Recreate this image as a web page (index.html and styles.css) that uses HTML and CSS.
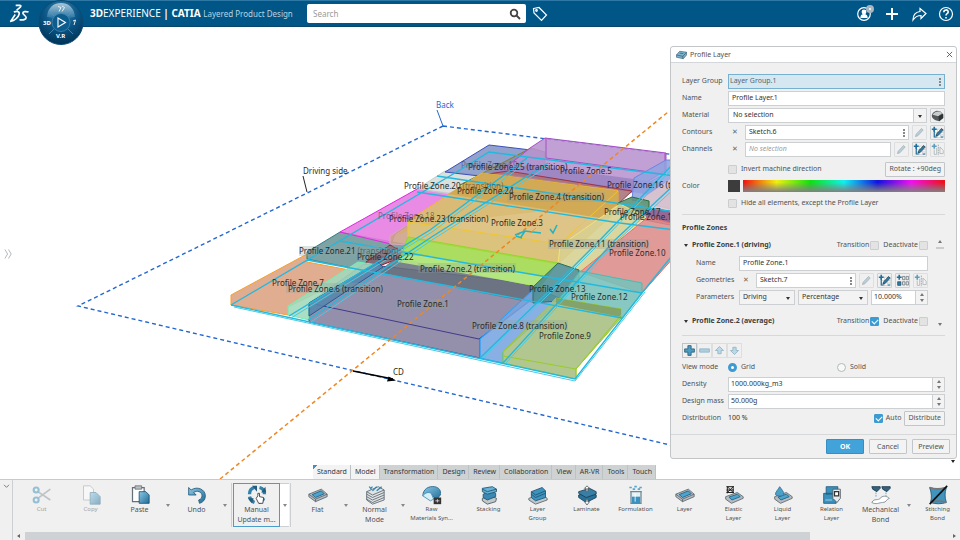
FILE: index.html
```html
<!DOCTYPE html>
<html lang="en">
<head>
    <meta charset="UTF-8">
    <meta name="viewport" content="width=device-width, initial-scale=1.0">
    <title>3DEXPERIENCE | CATIA Layered Product Design</title>
    <link rel="stylesheet" href="styles.css">
</head>
<body>
    <!-- Shared icons -->
    <svg class="sprite" aria-hidden="true">
        <defs>
            <linearGradient id="steel" x1="0" y1="0" x2="1" y2="1">
                <stop offset="0" stop-color="#8cc8e6"/>
                <stop offset="1" stop-color="#1f6c98"/>
            </linearGradient>
            <radialGradient id="dial" cx="50%" cy="25%" r="75%">
                <stop offset="0" stop-color="#3f86b0"/>
                <stop offset="0.5" stop-color="#0b5787"/>
                <stop offset="1" stop-color="#003357"/>
            </radialGradient>
            <linearGradient id="shine" x1="0" y1="0" x2="0" y2="1">
                <stop offset="0" stop-color="#a9c6d8"/>
                <stop offset="1" stop-color="#2a77a5"/>
            </linearGradient>
        </defs>
        <symbol id="i-pencil" viewBox="0 0 16 16">
            <path d="M3 13l1-3 6.500-7 2 2-6.500 7z" fill="#a9c8d8" stroke="#8a979f" stroke-width=".8"/>
        </symbol>
        <symbol id="i-sketch" viewBox="0 0 16 16">
            <path d="M4 4h11v10H4zM4 8h11M4 11h11M8 4v10M12 4v10" fill="#fff" stroke="#a9b2b8" stroke-width=".6"/>
            <path d="M4 4v9.500h3M12 13.500h3" fill="none" stroke="#1b6e9b" stroke-width="1.400"/>
            <path d="M6 12.500l1-3 6-6.500 2 2-6 6.500z" fill="#2b7ca8" stroke="#1c3442" stroke-width=".8"/>
            <path d="M4 1v6M1 4h6" stroke="#1f6f9c" stroke-width="2"/>
        </symbol>
        <symbol id="i-pattern" viewBox="0 0 16 16">
            <path d="M8 3h3v4H8zM12.500 3h3v4h-3zM8 9.500h3v4H8zM12.500 9.500h3v4h-3z" fill="#e6e6e6" stroke="#68737a" stroke-width=".9"/>
            <path d="M2 9.500h4v4.500H2z" fill="#2b7ca8" stroke="#20445a" stroke-width=".8"/>
            <path d="M4 1v6M1 4h6" stroke="#1f6f9c" stroke-width="2"/>
        </symbol>
        <symbol id="i-mirror" viewBox="0 0 16 16">
            <path d="M4 8v6h3V6M11 13V5l4 4v4z" fill="#f4f4f4" stroke="#939ca2" stroke-width=".9"/>
            <path d="M9 2v13" stroke="#5c676e" stroke-width=".8" stroke-dasharray="2 1"/>
            <path d="M4 1v6M1 4h6" stroke="#3b89b2" stroke-width="2"/>
        </symbol>
        <symbol id="i-layer" viewBox="0 0 24 24">
            <path d="M1 11l15-6 7 6v3L9 20l-8-6z" fill="#b5bcc1" stroke="#59646c"/>
            <path d="M1 11l8 6 14-6M9 17v3" fill="none" stroke="#59646c"/>
            <path d="M5 11.500l11-4.500 3.500 3.500-10.500 4.500z" fill="#4da4cf" stroke="#1c5d80"/>
        </symbol>
    </svg>

    <header>
        <svg class="logo" viewBox="0 0 22 20" role="img" aria-label="DS">
            <path d="M7 1.500h4.500c1.500 0 1 1.500-.5 2.500L8 6.500M5 8.500c4-1.500 6.500-.500 5.500 2.500-1 3.500-4 6-9.500 7.500M1.500 18.500L6.500 11M20.500 8.500c-3-1-6-.500-6 1 0 2 3.500 2.500 3.500 5 0 2-3.500 2.500-7 2" fill="none" stroke="#fff" stroke-width="1.700"/>
        </svg>
        <div class="compass">
            <svg viewBox="0 0 46 46" role="img" aria-label="Compass">
                <circle cx="23" cy="22.500" r="22" fill="url(#dial)" stroke="#0b4b74"/>
                <path d="M9 17C10 7 16 3 23 3s13 4 14 14l-7 1c-2-5-12-5-14 0z" fill="url(#shine)"/>
                <circle cx="23" cy="22.500" r="9" fill="#0c5c8d" stroke="#3f89b4" stroke-width=".8"/>
                <path d="M11 11l5 5M35 11l-5 5M11 34l5-5M35 34l-5-5" stroke="#4f97bf" stroke-width=".8"/>
                <path d="M20 18l7.500 4.500L20 27z" fill="none" stroke="#fff" stroke-width="1.100"/>
                <path d="M20 6.500l3 1-2 4M24 6l2.500 1.500-2.500 4M35 21l2.500-1-1.500 5" fill="none" stroke="#e4f1f8"/>
                <text x="5" y="25">3D</text>
                <text x="18" y="38">V.R</text>
            </svg>
        </div>
        <h1><b>3D</b>EXPERIENCE <b>| CATIA</b> <span>Layered Product Design</span></h1>
        <form class="search">
            <input type="search" placeholder="Search" aria-label="Search">
            <button type="button" aria-label="Run search">
                <svg viewBox="0 0 12 12"><circle cx="5" cy="5" r="3.300"/><path d="M7.500 7.500l3.500 3.500"/></svg>
            </button>
        </form>
        <button class="bar-icon" aria-label="Tags">
            <svg viewBox="0 0 16 16"><path d="M1.500 2.500L7 1.500l7.500 7.500-5 5.500L2 7z"/><circle cx="4.500" cy="4.500" r=".8"/></svg>
        </button>
        <nav class="bar-actions">
            <button class="bar-icon" aria-label="Profile">
                <svg viewBox="0 0 16 16"><circle cx="7" cy="8" r="6.300"/><circle cx="7" cy="6" r="1.800" fill="#fff"/><path d="M4 11.500c0-4 6-4 6 0z" fill="#fff"/></svg>
                <i class="status"></i>
            </button>
            <button class="bar-icon" aria-label="Add">
                <svg viewBox="0 0 16 16"><path d="M8 2v12M2 8h12" stroke-width="2"/></svg>
            </button>
            <button class="bar-icon" aria-label="Share">
                <svg viewBox="0 0 16 16"><path d="M9 2.500l6 5-5 5V9.500C6 9.500 4 11 2 14c0-5 3-8 7-8.500z"/></svg>
            </button>
            <button class="bar-icon" aria-label="Help">
                <svg viewBox="0 0 16 16"><circle cx="8" cy="8" r="6.500"/><path d="M5.800 6.200c0-3 4.400-3 4.400-.2 0 1.700-2.200 1.700-2.200 3.500M8 11v1.500" stroke-width="1.600"/></svg>
            </button>
        </nav>
    </header>

    <main>
        <!-- 3D view -->
        <svg class="scene" viewBox="0 27 960 452" preserveAspectRatio="xMidYMid slice">
            <g class="frame">
                <path d="M443 126L78 306L700 452M443 126L700 158"/>
                <path d="M443 126l-6-16" class="solid"/>
            </g>
            <g class="solids">
                <path d="M231 295L307 254V262L360 272L288 307V315L231 305z" fill="#dda282" stroke="#f5a12c"/>
                <path d="M307 252L340 232L408 245L366 271L307 259z" fill="#6d9598" stroke="#2f7f84"/>
                <path d="M340 232L417 189L457 194L395 234L391 244z" fill="#e67ae0" stroke="#dd2ade"/>
                <path d="M417 189L445 171L488 176L457 195z" fill="#d5dcd6" stroke="#b9cfd0"/>
                <path d="M445 172L489 145L531 150L488 177z" fill="#8494c6" stroke="#3c50b8"/>
                <path d="M390 244V236L457 193L484 175L484 190L408 245z" fill="#cda08a" stroke="#d9a8c0"/>
                <path d="M460 185L531 148L545 152L545 165L483 176z" fill="#8790a5" stroke="#817f30"/>
                <path d="M545 138L666 153V170L634 190L500 172L530 148z" fill="#b893cf" stroke="#a64fc4"/>
                <path d="M546 138V158L665 174V153M665 174L630 193" fill="none" stroke="#a64fc4"/>
                <path d="M488 172L530 165L670 184V198L632 192z" fill="#9a83c2"/>
                <path d="M634 178L666 160H675V210L632 200z" fill="#91a2e0" stroke="#6a86e0"/>
                <path d="M640 200L675 176V225L648 214z" fill="#dfc5cc"/>
                <path d="M488 174L508 171L632 191L616 206L482 183z" fill="#a8727a" stroke="#9c3440"/>
                <path d="M395 236L484 174L618 190V203L420 225z" fill="#d8ad67"/>
                <path d="M408 221L482 173L618 191V210L558 264L408 238z" fill="#d9bd76" stroke="#f2ba2b"/>
                <path d="M448 194L483 173L618 191V204L600 218z" fill="#d0a650"/>
                <path d="M408 222L560 244V264L408 238z" fill="#dbc37c" stroke="#f0c52f"/>
                <path d="M560 244L618 191" stroke="#f0c52f"/>
                <path d="M618 203L632 197L649 201V211L640 217L618 212z" fill="#5a9275" stroke="#236f37"/>
                <path d="M648 208L675 212V226L640 219z" fill="#8d5a8b" stroke="#5f1465"/>
                <path d="M560 246L620 204L646 217L580 272L558 264z" fill="#d6cf91" stroke="#f0e37a"/>
                <path d="M580 272L648 217L675 224V256L642 293z" fill="#dc8d8a" stroke="#e76b6b"/>
                <path d="M390 245L366 262V271L408 255z" fill="#82626f" stroke="#8c1c2a"/>
                <path d="M309 303L364 264L534 284V298L480 339V358L309 322z" fill="#85809f" stroke="#423a8a"/>
                <path d="M378 272L404 251L544 277L533 303z" fill="#66707d"/>
                <path d="M309 303L479 339L533 298" fill="none" stroke="#423a8a"/>
                <path d="M408 237L558 263L540 287L400 258z" fill="#9fd84b" stroke="#8fda27"/>
                <path d="M400 255L430 256L545 277L535 286L398 262z" fill="#b7e985"/>
                <path d="M288 306L358 262L378 265L309 308V320L288 315z" fill="#a1d9bc" stroke="#73f0b4"/>
                <path d="M309 303L378 262L383 267L309 316z" fill="#5786ad" stroke="#27598c"/>
                <path d="M480 339L535 288L562 299L503 352V363L480 358z" fill="#79a5e0" stroke="#1da4ff"/>
                <path d="M558 263L579 270V283L557 301L533 303V287z" fill="#4d8d93" stroke="#2d7061"/>
                <path d="M580 271L642 283V293L622 318L556 303z" fill="#76c2b9" stroke="#45bdb4"/>
                <path d="M503 352L556 298L621 309V318L576 369V379L503 363z" fill="#a6bf80" stroke="#99cc25"/>
                <path d="M556 298L621 309V317L556 304z" fill="#7f9e67"/>
                <path d="M503 356L576 369L621 315M576 369V379" fill="none" stroke="#99cc25"/>
            </g>
            <path class="edges" d="M231 305L575 379L642 293L675 252M231 305L460 170L489 152L675 176M289 316L430 230L527 158M308 320L430 238L548 163M480 358L545 295L600 240L675 162M503 363L615 240L675 184M307 260L460 288L622 318M340 241L460 262L642 293M417 192L620 223L675 230M437 176L675 212"/>
            <path class="edges light" d="M234 307L575 381L645 292M291 318L432 232L530 160M311 322L432 240L550 165M483 358L548 295L603 240L675 166M506 363L618 240L675 188"/>
            <path class="axis" d="M220 479L668 112"/>
            <g class="triad">
                <path d="M515 235l10-4 16 2M521 237l4-6M550 229l3 4 4-8M516 236l6 2"/>
                <path d="M525 221v6M528 220v7M536 228l-6 5" class="warm"/>
            </g>
            <path d="M303 176l4 16" stroke="#222"/>
            <path d="M353 371l40 8" stroke="#000" stroke-width="1.500"/>
            <path d="M396 380.500l-9 1 1.500-5z"/>
            <g class="tags">
                <path d="M286 283h98v10h-98zM299 246h105v10H299zM418 263h98v10h-98zM396 299h54v10h-54zM471 320h97v10h-97zM507 192h98v10h-98zM548 239h101v10H548z"/>
            </g>
            <g class="labels">
                <text x="436" y="108" class="blue">Back</text>
                <text x="303" y="174">Driving side</text>
                <text x="393" y="375">CD</text>
                <text x="461" y="168" class="dim">Profile Zone.19</text>
                <text x="468" y="170">Profile Zone.25 (transition)</text>
                <text x="560" y="174">Profile Zone.5</text>
                <text x="404" y="189">Profile Zone.20 <tspan class="dim">(transition)</tspan></text>
                <text x="457" y="194">Profile Zone.24</text>
                <text x="509" y="200">Profile Zone.4 (transition)</text>
                <text x="607" y="188">Profile Zone.16 (transition)</text>
                <text x="604" y="215">Profile Zone.17</text>
                <text x="620" y="220">Profile Zone.15</text>
                <text x="491" y="226">Profile Zone.3</text>
                <text x="378" y="219" class="dim">Profile Zone.18</text>
                <text x="389" y="222">Profile Zone.23 (transition)</text>
                <text x="549" y="247">Profile Zone.11 (transition)</text>
                <text x="609" y="256">Profile Zone.10</text>
                <text x="299" y="254">Profile Zone.21 <tspan class="dim">(transition)</tspan></text>
                <text x="357" y="260">Profile Zone.22</text>
                <text x="420" y="272">Profile Zone.2 (transition)</text>
                <text x="272" y="286">Profile Zone.7</text>
                <text x="288" y="292">Profile Zone.6 (transition)</text>
                <text x="529" y="292">Profile Zone.13</text>
                <text x="571" y="300">Profile Zone.12</text>
                <text x="397" y="307">Profile Zone.1</text>
                <text x="472" y="329">Profile Zone.8 (transition)</text>
                <text x="539" y="339">Profile Zone.9</text>
            </g>
        </svg>
        <button class="tree-toggle" aria-label="Show tree">
            <svg viewBox="0 0 10 12"><path d="M1 1l3 5-3 5M5 1l3 5-3 5"/></svg>
        </button>

        <!-- Profile Layer dialog -->
        <section class="dialog" role="dialog" aria-labelledby="dialog-title">
            <div class="dialog-title">
                <svg viewBox="0 0 24 24"><path d="M1 13L8 5l15 2v6l-7 8-15-3z" fill="#7db5d1" stroke="#3f6377" stroke-width="1.500"/><path d="M1 13l14 3 8-9M15 16v5M8 9l8 1" fill="none" stroke="#33566a" stroke-width="1.500"/></svg>
                <h2 id="dialog-title">Profile Layer</h2>
                <button class="close" aria-label="Close"><svg viewBox="0 0 8 8"><path d="M1 1l6 6M7 1L1 7"/></svg></button>
            </div>
            <div class="dialog-body">
                <div class="row">
                    <label for="group">Layer Group</label>
                    <span class="field active"><input id="group" value="Layer Group.1"><i class="dots"></i></span>
                </div>
                <div class="row">
                    <label for="name">Name</label>
                    <span class="field"><input id="name" value="Profile Layer.1"></span>
                </div>
                <div class="row">
                    <label for="material">Material</label>
                    <span class="select plain"><select id="material"><option>No selection</option></select></span>
                    <button class="tile" aria-label="Material library"><svg viewBox="0 0 16 16"><path d="M1 8c0-3 3-5 6-6 4 0 7 2 8 5v4l-5 4C5 14 1 12 1 8z" fill="#55595c"/><path d="M2 7c3-5 9-5 12-2l-5 4z" fill="#c9cccd"/><path d="M9 9l6-3v5l-5 4z" fill="#303335"/></svg></button>
                </div>
                <div class="row">
                    <label for="contours">Contours</label>
                    <button class="clear" aria-label="Clear contours">✕</button>
                    <span class="field"><input id="contours" value="Sketch.6"><i class="dots"></i></span>
                    <button class="tile off" aria-label="Edit contour"><svg><use href="#i-pencil"/></svg></button>
                    <button class="tile" aria-label="New contour"><svg><use href="#i-sketch"/></svg></button>
                </div>
                <div class="row group-end">
                    <label for="channels">Channels</label>
                    <button class="clear" aria-label="Clear channels">✕</button>
                    <span class="field"><input id="channels" placeholder="No selection"></span>
                    <button class="tile off" aria-label="Edit channel"><svg><use href="#i-pencil"/></svg></button>
                    <button class="tile" aria-label="New channel"><svg><use href="#i-sketch"/></svg></button>
                    <button class="tile off" aria-label="Mirror channel"><svg><use href="#i-mirror"/></svg></button>
                </div>
                <div class="row indent">
                    <input type="checkbox" id="invert"><label for="invert">Invert machine direction</label>
                    <button class="btn push">Rotate : +90deg</button>
                </div>
                <div class="row">
                    <label for="hue">Color</label>
                    <button class="swatch" id="hue" aria-label="Current color"></button>
                    <div class="spectrum"></div>
                </div>
                <div class="row indent">
                    <input type="checkbox" id="hide"><label for="hide">Hide all elements, except the Profile Layer</label>
                </div>

                <hr>
                <h3>Profile Zones</h3>
                <div class="zones">
                    <div class="zone-list">
                        <div class="zone-head">
                            <i class="down"></i><h4>Profile Zone.1 (driving)</h4>
                            <label for="t1">Transition</label><input type="checkbox" id="t1">
                            <label for="d1">Deactivate</label><input type="checkbox" id="d1">
                        </div>
                        <div class="row">
                            <label for="zname">Name</label>
                            <span class="field"><input id="zname" value="Profile Zone.1"></span>
                        </div>
                        <div class="row">
                            <label for="geom">Geometries</label>
                            <button class="clear" aria-label="Clear geometries">✕</button>
                            <span class="field"><input id="geom" value="Sketch.7"><i class="dots"></i></span>
                            <button class="tile off" aria-label="Edit geometry"><svg><use href="#i-pencil"/></svg></button>
                            <button class="tile" aria-label="New geometry"><svg><use href="#i-sketch"/></svg></button>
                            <button class="tile" aria-label="Pattern"><svg><use href="#i-pattern"/></svg></button>
                            <button class="tile off" aria-label="Mirror"><svg><use href="#i-mirror"/></svg></button>
                        </div>
                        <div class="row">
                            <label for="params">Parameters</label>
                            <span class="select"><select id="params"><option>Driving</option></select></span>
                            <span class="select wide"><select aria-label="Unit"><option>Percentage</option></select></span>
                            <span class="field spin"><input aria-label="Value" value="10.000%"><span class="steps"><button class="up" aria-label="Increase"></button><button class="down" aria-label="Decrease"></button></span></span>
                        </div>
                        <div class="zone-head last">
                            <i class="down"></i><h4>Profile Zone.2 (average)</h4>
                            <label for="t2">Transition</label><input type="checkbox" id="t2" checked>
                            <label for="d2">Deactivate</label><input type="checkbox" id="d2">
                        </div>
                    </div>
                    <div class="zone-scroll"><i class="up"></i><b></b><i class="down"></i></div>
                </div>
                <hr>

                <div class="zone-tools">
                    <button aria-label="Add zone"><svg viewBox="0 0 16 16"><path d="M6 2h4v4h4v4h-4v4H6v-4H2V6h4z" fill="#4b9cc4" stroke="#285a75"/></svg></button>
                    <button aria-label="Remove zone" class="off"><svg viewBox="0 0 16 16"><path d="M2 6h12v4H2z" fill="#aecfdf" stroke="#8eb2c4"/></svg></button>
                    <button aria-label="Move up" class="off"><svg viewBox="0 0 16 16"><path d="M8 3l5 5h-3v4H6V8H3z" fill="#bcd9e6" stroke="#8eb2c4"/></svg></button>
                    <button aria-label="Move down" class="off"><svg viewBox="0 0 16 16"><path d="M8 13l5-5h-3V4H6v4H3z" fill="#bcd9e6" stroke="#8eb2c4"/></svg></button>
                </div>
                <div class="row view-mode">
                    <span>View mode</span>
                    <input type="radio" name="view" id="grid" checked><label for="grid">Grid</label>
                    <input type="radio" name="view" id="solid"><label for="solid">Solid</label>
                </div>
                <div class="row">
                    <label for="density">Density</label>
                    <span class="field spin"><input id="density" value="1000.000kg_m3"><span class="steps"><button class="up" aria-label="Increase"></button><button class="down" aria-label="Decrease"></button></span></span>
                </div>
                <div class="row">
                    <label for="mass">Design mass</label>
                    <span class="field spin"><input id="mass" value="50.000g"><span class="steps"><button class="up" aria-label="Increase"></button><button class="down" aria-label="Decrease"></button></span></span>
                </div>
                <div class="row distribution">
                    <span>Distribution</span><output>100 %</output>
                    <input type="checkbox" id="auto" checked><label for="auto">Auto</label>
                    <button class="btn">Distribute</button>
                </div>
            </div>
            <div class="dialog-footer">
                <button class="btn primary">OK</button>
                <button class="btn">Cancel</button>
                <button class="btn">Preview</button>
            </div>
        </section>

        <nav class="tabs">
            <a href="#" class="first">Standard</a>
            <a href="#" class="on">Model</a>
            <a href="#">Transformation</a>
            <a href="#">Design</a>
            <a href="#">Review</a>
            <a href="#">Collaboration</a>
            <a href="#">View</a>
            <a href="#">AR-VR</a>
            <a href="#">Tools</a>
            <a href="#">Touch</a>
        </nav>
        <i class="down corner"></i>
    </main>

    <footer>
        <button class="collapse" aria-label="Collapse"><svg viewBox="0 0 8 6"><path d="M1 1l3 3 3-3"/></svg></button>
        <div class="action-bar">
            <div class="tools">
                <button class="tool small disabled">
                    <svg viewBox="0 0 24 24"><path d="M7 8l15 10M7 16L22 5" stroke="#8d979d" stroke-width="2"/><circle cx="5" cy="6" r="3" fill="none" stroke="#3d8fba" stroke-width="2.500"/><circle cx="5" cy="18" r="3" fill="none" stroke="#3d8fba" stroke-width="2.500"/></svg>
                    Cut</button>
                <button class="tool small disabled">
                    <svg viewBox="0 0 24 24"><path d="M3 1h8l4 4v13H3z" fill="#fff" stroke="#8b959c"/><path d="M11 9h7l5 5v9H11z" fill="url(#steel)" stroke="#2e6a8a"/></svg>
                    Copy</button>
                <button class="tool">
                    <svg viewBox="0 0 24 24"><path d="M3 3h14v17H3z" fill="#fff" stroke="#667078" stroke-width="1.500"/><path d="M6 1h8v4H6z" fill="#b9c0c4" stroke="#667078"/><path d="M11 8h8l4 4v10H11z" fill="url(#steel)" stroke="#1c4f6d"/></svg>
                    Paste</button>
                <button class="more" aria-label="Paste options"></button>
                <button class="tool">
                    <svg viewBox="0 0 24 24"><path d="M2 3l3 3c7-5 17-1 17 7 0 5-3 8-7 9l-1-4c3-1 4-3 4-5 0-5-6-7-10-4l3 3H2z" fill="url(#steel)" stroke="#1f5878"/></svg>
                    Undo</button>
                <button class="more" aria-label="Undo options"></button>
                <div class="tool-group">
                    <button class="tool picked">
                        <svg viewBox="0 0 24 24"><path d="M3 11c0-4 2-7 6-8M15 3c4 1 6 4 6 8M3 14c1 4 3 6 6 7M14 21c3-1 5-2 6-5" fill="none" stroke="#3282ac" stroke-width="4"/><path d="M6 1h6v7zM17 9h6l-1-7zM1 16h7l-2 6z" fill="#225d7e"/><path d="M13 13v-3h2v4l5 1-1 7h-5l-3-6z" fill="#fff" stroke="#333"/></svg>
                        Manual<span>Update m...</span></button>
                    <button class="more" aria-label="Update options"></button>
                </div>
                <button class="tool">
                    <svg><use href="#i-layer"/></svg>
                    Flat</button>
                <button class="more" aria-label="Flat options"></button>
                <button class="tool">
                    <svg viewBox="0 0 24 24"><path d="M2 8l14-6 7 4v12L9 23l-7-5z" fill="#dfe3e5" stroke="#59646c"/><path d="M2 8l7 4 14-6M2 11l7 4 14-6M2 14l7 4 14-6M2 17l7 4 14-6" fill="none" stroke="#59646c"/><path d="M6 5l3-3M9 7l5-5M14 7l6-5M5 2l3 3" stroke="#2d83b1" stroke-width="1.500"/></svg>
                    Normal<span>Mode</span></button>
                <button class="more" aria-label="Mode options"></button>
                <button class="tool small">
                    <svg viewBox="0 0 24 24"><path d="M1 13C1 5 8 1 15 2c6 1 8 5 7 10l-5 6-6-8z" fill="url(#steel)" stroke="#1f6489"/><path d="M1 13c3-4 7-5 10-3l3 7-4 2z" fill="#d7eff8" stroke="#3d8ab0"/><path d="M14 15h9v8h-9z" fill="#333"/><path d="M16 19h5M18.500 17v4" stroke="#ddd"/></svg>
                    Raw<span>Materials Syn...</span></button>
                <i class="sep"></i>
                <button class="tool small">
                    <svg viewBox="0 0 24 24"><path d="M4 16l11-3 6 3-1 4-10 3-6-4z" fill="#c1c8cc" stroke="#4a565e"/><path d="M5 11l10-4 5 3v4l-10 4-5-3z" fill="#3a89b2" stroke="#1d526f"/><path d="M4 4l12-2 5 3v3l-11 3-6-3z" fill="#66b2d6" stroke="#1d526f"/><path d="M4 5l6 3 11-3" fill="none" stroke="#1d526f"/></svg>
                    Stacking</button>
                <button class="tool small">
                    <svg viewBox="0 0 24 24"><path d="M1 16l15-5 7 5v2L9 23l-8-5z" fill="#c1c8cc" stroke="#59646c"/><path d="M4 8l13-5 4 4v8l-12 4-5-4z" fill="#3d93c0" stroke="#1d526f"/><path d="M4 8l5 4 12-5M4 11l5 4 12-5" fill="none" stroke="#1d526f"/></svg>
                    Layer<span>Group</span></button>
                <button class="tool small">
                    <svg viewBox="0 0 24 24"><path d="M2 12l13-5 8 5v3L11 21l-9-6z" fill="#28719a" stroke="#143f58"/><path d="M2 8l13-4 8 4v3L11 15l-9-5z" fill="#397fa5" stroke="#143f58"/><path d="M12 1l3 3h-2v4h-2V4H9zM12 24l3-4h-2v-3h-2v3H9z" fill="#fff" stroke="#555"/></svg>
                    Laminate</button>
                <button class="tool small">
                    <svg viewBox="0 0 24 24"><path d="M5 8h14M6 8v14h12V8" fill="#e6f1f6" stroke="#6f8793" stroke-width="1.500"/><path d="M7 14h10v8H7z" fill="#3b92bf"/><path d="M4 3h3M10 2h3M16 3h3M8 5h3M14 5h3" stroke="#57a8cf" stroke-width="2"/><path d="M11 10v10" stroke="#fff"/></svg>
                    Formulation</button>
                <button class="tool small">
                    <svg><use href="#i-layer"/></svg>
                    Layer</button>
                <button class="tool small">
                    <svg viewBox="0 0 24 24"><path d="M2 14l14-5 7 5v2L9 22l-7-5z" fill="#b5bcc1" stroke="#59646c"/><path d="M6 14.500l10-3.500 3.500 3-10 4z" fill="#4da4cf" stroke="#1c5d80"/><path d="M3 2h9M3 6h9M3 9h9M4 2l7 7M11 2L4 9M4 2v8M11 2v8" stroke="#222" stroke-width="1.200"/></svg>
                    Elastic<span>Layer</span></button>
                <button class="tool small">
                    <svg viewBox="0 0 24 24"><path d="M2 14l14-5 7 5v2L9 22l-7-5z" fill="#b5bcc1" stroke="#59646c"/><path d="M6 14.500l10-3.500 3.500 3-10 4z" fill="#4da4cf" stroke="#1c5d80"/><path d="M8 2c3 4 5 6 5 9s-10 3-10 0 3-5 5-9z" fill="#4d9fc8" stroke="#2d7196"/></svg>
                    Liquid<span>Layer</span></button>
                <button class="tool small">
                    <svg viewBox="0 0 24 24"><path d="M5 2h14v9H5zM2 10h15v12H2z" fill="#3b91bd" stroke="#1f5a7b"/><path d="M4 18h8" stroke="#b4dced"/><path d="M13 5h9v11l-4 5-5-5z" fill="#e7eaec" stroke="#4c575e"/><path d="M15 8h5v5h-5z" fill="#fff" stroke="#333" stroke-width="1.500"/></svg>
                    Relation<span>Layer</span></button>
                <button class="tool">
                    <svg viewBox="0 0 24 24"><path d="M1 2h10v2L7 8 2 5zM13 2h10v2l-4 4-5-3z" fill="#34627d" stroke="#18364a"/><path d="M6 9v5M18 9v5" stroke="#46a2cf" stroke-dasharray="2 1"/><path d="M1 21c3-6 7-1 11-6 3-3 8-1 10 1-4 1-3 5-8 5-4 0-8 3-13 0z" fill="#fff" stroke="#79858c"/></svg>
                    Mechanical<span>Bond</span></button>
                <button class="more" aria-label="Bond options"></button>
                <button class="tool small">
                    <svg viewBox="0 0 24 24"><path d="M2 3c5 2 13 2 20 0-2 6-2 12 0 18-6 2-13 2-19 0 2-6 1-12-1-18z" fill="#4094be" stroke="#245470"/><path d="M2 3c5 2 13 2 20 0M3 21c6-2 13-2 19 0" fill="none" stroke="#777" stroke-width="2"/><path d="M2 23L23 1" stroke="#111" stroke-width="2"/></svg>
                    Stitching<span>Bond</span></button>
            </div>
            <div class="scrollbar"><i class="left"></i><div class="track"><b></b></div><i class="right"></i></div>
        </div>
    </footer>
</body>
</html>
```
FILE: styles.css
```css
* {
    box-sizing: border-box;
}
body {
    margin: 0;
    min-height: 100vh;
    display: flex;
    flex-direction: column;
    background-color: white;
    color: #4f5356;
    font-family: "Noto Sans", "Open Sans", sans-serif;
    font-size: 7px;
    line-height: 10px;
    overflow: hidden;
}
button,
input,
select {
    font: inherit;
    color: inherit;
    margin: 0;
}
button {
    padding: 0;
    border: none;
    background: none;
}
h1, h2, h3, h4 {
    margin: 0;
}
svg {
    display: block;
}
.sprite {
    position: absolute;
    width: 0;
    height: 0;
}

/* Top bar */
header {
    display: flex;
    align-items: center;
    height: 27px;
    padding: 0 6px 0 9px;
    background-color: #005686;
    border-top: 1px solid #2d78a5;
    border-bottom: 1px solid #08456a;
    color: white;
    position: relative;
    z-index: 2;
}
.logo {
    width: 21px;
    height: 19px;
}
.compass {
    position: relative;
    width: 60px;
    height: 25px;
}
.compass svg {
    position: absolute;
    left: 8px;
    top: -1px;
    width: 46px;
    height: 46px;
}
.compass text {
    font-size: 6px;
    font-weight: bold;
    fill: white;
}
header h1 {
    width: 217px;
    font-size: 10px;
    font-weight: normal;
    line-height: 14px;
    white-space: nowrap;
}
header h1 span {
    font-size: 8px;
    color: #b7d3e3;
}
.search {
    display: flex;
    width: 219px;
    height: 19px;
    background-color: white;
    border-radius: 2px;
}
.search input {
    flex: 1;
    min-width: 0;
    padding: 0 6px;
    border: none;
    background: none;
    font-size: 8px;
}
.search input::placeholder {
    color: #9a9a9a;
}
.search button {
    width: 22px;
    padding: 4px 5px;
}
.search svg {
    width: 12px;
    fill: none;
    stroke: #444;
    stroke-width: 1.8;
}
.bar-icon {
    position: relative;
    width: 16px;
    height: 16px;
}
.bar-icon svg {
    width: 16px;
    height: 16px;
    fill: none;
    stroke: white;
    stroke-width: 1.2;
}
.search + .bar-icon {
    margin-left: 6px;
}
.bar-actions {
    display: flex;
    gap: 11px;
    margin-left: auto;
}
.status {
    position: absolute;
    right: -1px;
    top: -1px;
    width: 8px;
    height: 8px;
    border: 3px solid #a9b6bf;
    border-radius: 50%;
    background-color: white;
}

/* 3D view */
main {
    position: relative;
    flex: 1;
    display: flex;
    min-height: 452px;
}
.scene {
    position: absolute;
    inset: 0;
    width: 100%;
    height: 100%;
}
.frame path {
    fill: none;
    stroke: #2468cf;
    stroke-width: 1.4;
    stroke-dasharray: 4 3;
}
.frame .solid {
    stroke-width: 1;
    stroke-dasharray: none;
}
.solids {
    fill-opacity: 0.88;
}
.edges {
    fill: none;
    stroke: #22b9df;
    stroke-width: 1.4;
}
.edges.light {
    stroke: #48cbe6;
    stroke-width: 1;
}
.axis {
    stroke: #ee8722;
    stroke-width: 1.5;
    stroke-dasharray: 4 3;
}
.triad path {
    fill: none;
    stroke: #23b4c4;
    stroke-width: 1.6;
}
.triad .warm {
    stroke: #e99a35;
    stroke-width: 1;
}
.tags {
    fill: #8fa3a0;
    fill-opacity: 0.3;
}
.labels {
    font-size: 8px;
    fill: #2b2b2b;
}
.labels .dim {
    fill-opacity: 0.5;
}
.labels .blue {
    fill: #2468cf;
}
.tree-toggle {
    position: absolute;
    left: 4px;
    top: 221px;
}
.tree-toggle svg {
    width: 9px;
    height: 12px;
    fill: none;
    stroke: #a9b0b4;
}

/* Small arrows */
.up,
.down,
.left,
.right {
    display: block;
    width: 0;
    height: 0;
    border: 2px solid transparent;
}
.up {
    border-top: none;
    border-bottom: 3px solid #777;
}
.down {
    border-bottom: none;
    border-top: 3px solid #777;
}
.left {
    border-left: none;
    border-right: 3px solid #666;
}
.right {
    border-right: none;
    border-left: 3px solid #666;
}
.corner {
    position: absolute;
    right: 5px;
    bottom: 16px;
    border-top-color: #222;
}

/* Dialog */
.dialog {
    position: absolute;
    top: 19px;
    right: 3px;
    width: 287px;
    border: 1px solid #c2c6c8;
    border-radius: 3px;
    background-color: #f0f0f0;
}
.dialog-title {
    display: flex;
    align-items: center;
    gap: 3px;
    height: 16px;
    padding: 0 3px 0 5px;
    background-color: white;
    border-bottom: 1px solid #d4d7d9;
    border-radius: 3px 3px 0 0;
}
.dialog-title svg {
    width: 11px;
    height: 11px;
}
.dialog-title h2 {
    flex: 1;
    font-size: 7px;
    font-weight: normal;
}
.close svg {
    width: 7px;
    height: 7px;
    stroke: #555;
}
.dialog-body {
    padding: 10px 11px 8px;
}
.row {
    display: flex;
    align-items: center;
    gap: 3px;
    height: 16px;
    margin-bottom: 1px;
}
.row.group-end {
    margin-bottom: 4px;
}
.row > label:first-child,
.row > span:first-child {
    width: 43px;
    white-space: nowrap;
}
.row.indent {
    padding-left: 46px;
}
.row.indent > label {
    margin-left: 1px;
}
.field,
.select {
    display: flex;
    flex: 1;
    min-width: 0;
    height: 15px;
    background-color: white;
    border: 1px solid #cdd0d2;
    color: #333;
}
.field input {
    flex: 1;
    width: 0;
    min-width: 0;
    padding: 0 3px;
    border: none;
    background: none;
}
.field input::placeholder {
    color: #9b9b9b;
    font-style: italic;
}
.field.active {
    background-color: #d5e8f2;
    border-color: #78b0cf;
}
.field.active input {
    padding-left: 1px;
    color: #55656e;
}
.dots {
    width: 2px;
    height: 8px;
    margin: 3px 3px 0 0;
    background: repeating-linear-gradient(#888 0 2px, transparent 2px 3px);
}
.select {
    position: relative;
    background-color: #f3f3f3;
}
.select select {
    width: 100%;
    padding: 0 3px;
    border: none;
    background: none;
    appearance: none;
}
.select::after {
    content: "";
    position: absolute;
    right: 4px;
    top: 6px;
    border: 2px solid transparent;
    border-top: 3px solid #333;
    border-bottom: none;
}
.select.wide {
    flex: 0 0 70px;
}
.select.plain {
    background: linear-gradient(to left, #f3f3f3 12px, #cdd0d2 12px, #cdd0d2 13px, white 13px);
}
.select.plain select {
    padding-left: 4px;
}
.clear {
    width: 14px;
    color: #666;
}
.tile {
    width: 15px;
    height: 15px;
    border: 1px solid #cdd0d2;
    border-radius: 1px;
}
.tile svg {
    width: 13px;
    height: 13px;
}
.tile.off {
    border-color: #dcdedf;
}
.tile.off svg {
    opacity: 0.8;
}
.btn {
    height: 15px;
    padding: 0 3px;
    background-color: #f3f3f3;
    border: 1px solid #c3c6c8;
    border-radius: 1px;
}
.push {
    margin-left: auto;
}
.spin input {
    padding: 0 2px;
}
.steps {
    display: flex;
    flex-direction: column;
    align-items: center;
    justify-content: space-between;
    width: 12px;
    padding: 2px 0;
    background-color: #f3f3f3;
    border-left: 1px solid #cdd0d2;
}

input[type="checkbox"],
input[type="radio"] {
    appearance: none;
    flex: none;
    position: relative;
    width: 9px;
    height: 9px;
    background-color: #e3e3e3;
    border: 1px solid #cbcdce;
    border-radius: 1px;
}
input[type="checkbox"]:checked {
    background-color: #3d9bd3;
    border-color: #3d9bd3;
}
input[type="checkbox"]:checked::after {
    content: "";
    position: absolute;
    left: 2px;
    top: 0;
    width: 3px;
    height: 5px;
    border: solid white;
    border-width: 0 1px 1px 0;
    transform: rotate(45deg);
}
input[type="radio"] {
    border-color: #b4b7b9;
    border-radius: 50%;
    background-color: #f8f8f8;
}
input[type="radio"]:checked {
    border: 3px solid #3d9bd3;
    background-color: white;
}

.swatch {
    width: 12px;
    height: 12px;
    background-color: #3c3c3c;
}
.spectrum {
    flex: 1;
    height: 12px;
    background:
        linear-gradient(rgba(128, 128, 128, 0) 20%, #808080),
        linear-gradient(to right, #f01010, #f0f010, #10e010, #10f0f0, #1010e0, #f010f0, #f01010);
}
hr {
    width: 100%;
    margin: 3px 0 8px;
    border: none;
    border-top: 1px solid #d6d8d9;
}
h3,
h4 {
    font-size: 7px;
    font-weight: bold;
    color: #3c3f41;
}

/* Zone list */
.zones {
    display: flex;
    margin-top: 7px;
}
.zone-list {
    flex: 1;
}
.zone-list .row {
    padding-left: 14px;
}
.zone-list .row > label:first-child {
    width: 40px;
}
.zone-head {
    display: flex;
    align-items: center;
    height: 10px;
    margin-bottom: 5px;
}
.zone-head.last {
    margin: 11px 0 0;
}
.zone-head .down {
    margin: 0 4px 0 2px;
    border-top-color: #333;
}
.zone-head h4 {
    flex: 1;
}
.zone-head label {
    margin: 0 1px 0 4px;
}
.zone-list .spin {
    flex: 0 0 57px;
}
.zone-scroll {
    display: flex;
    flex-direction: column;
    align-items: center;
    width: 17px;
    padding-left: 7px;
}
.zone-scroll b {
    width: 8px;
    height: 2px;
    margin-top: 4px;
    background-color: #ccc;
}
.zone-scroll .down {
    margin-top: auto;
}
.zones + hr {
    margin: 9px 0 7px;
}
.zone-tools {
    display: flex;
    margin-bottom: 1px;
}
.zone-tools button {
    width: 15px;
    height: 15px;
    border: 1px solid #bec3c6;
}
.zone-tools .off {
    border-color: #dcdedf;
}
.zone-tools svg {
    width: 13px;
    height: 13px;
}
.view-mode label {
    width: 93px;
    margin-left: 1px;
}
.distribution {
    margin-bottom: 0;
}
.distribution output {
    flex: 1;
    color: #333;
}
.dialog-footer {
    display: flex;
    justify-content: flex-end;
    gap: 5px;
    padding: 4px 6px;
    border-top: 1px solid #d6d8d9;
}
.dialog-footer .btn {
    width: 38px;
    padding: 0;
}
.dialog-footer .primary {
    background-color: #42a2da;
    border-color: #368ec2;
    color: white;
    font-weight: bold;
}

/* Tabs */
.tabs {
    position: absolute;
    bottom: 0;
    left: 50%;
    display: flex;
    height: 14px;
    margin-left: -167px;
    background-color: #cfd2d3;
    border-radius: 0 2px 0 0;
}
.tabs a {
    padding: 2px 3px 2px 4px;
    border-right: 1px solid #bdc2c4;
    color: #34383a;
    text-decoration: none;
}
.tabs .first,
.tabs .on {
    background-color: #f3f3f3;
}
.tabs .first {
    background: linear-gradient(135deg, #3d8fc4 3px, #f3f3f3 3px);
}

/* Action bar */
footer {
    display: flex;
    min-height: 61px;
    background-color: #f0f0f0;
    border-top: 1px solid #c6cacc;
    position: relative;
}
.collapse {
    display: flex;
    align-items: flex-start;
    justify-content: center;
    width: 13px;
    padding-top: 4px;
    border-right: 1px solid #cdd0d2;
}
.collapse svg {
    width: 7px;
    height: 5px;
    fill: none;
    stroke: #666;
}
.action-bar {
    flex: 1;
    min-width: 0;
    display: flex;
    flex-direction: column;
}
.tools {
    display: flex;
    flex: 1;
    padding-left: 4px;
    overflow: hidden;
}
.tool {
    display: flex;
    flex: none;
    flex-direction: column;
    align-items: center;
    width: 49px;
    padding-top: 5px;
    white-space: nowrap;
}
.tool svg {
    width: 20px;
    height: 20px;
}
.tool.small {
    font-size: 6px;
    line-height: 9px;
}
.tool.disabled {
    opacity: 0.5;
}
.more {
    display: flex;
    flex: none;
    align-items: flex-start;
    justify-content: center;
    width: 8px;
    padding-top: 24px;
}
.more::after {
    content: "";
    border: 2px solid transparent;
    border-top: 3px solid #888;
    border-bottom: none;
}
.tool-group {
    display: flex;
    height: 44px;
    margin: 3px 2px 0;
    padding: 0 1px;
    border: solid #cdd0d2;
    border-width: 0 1px;
}
.tool-group .more {
    width: 9px;
    padding-top: 20px;
    border: solid #cdd0d2;
    border-width: 1px 0;
    background-color: white;
}
.picked {
    width: 47px;
    padding-top: 1px;
    border: 1px solid #4b9cc8;
}
.sep {
    width: 1px;
    margin: 0 5px 0 3px;
    background-color: #cdd0d2;
}
.scrollbar {
    display: flex;
    align-items: center;
    height: 9px;
    padding: 0 4px;
}
.track {
    flex: 1;
    height: 8px;
    margin: 0 4px 0 5px;
}
.track b {
    display: block;
    width: 85%;
    height: 8px;
    background-color: #cfd2d4;
}
```
